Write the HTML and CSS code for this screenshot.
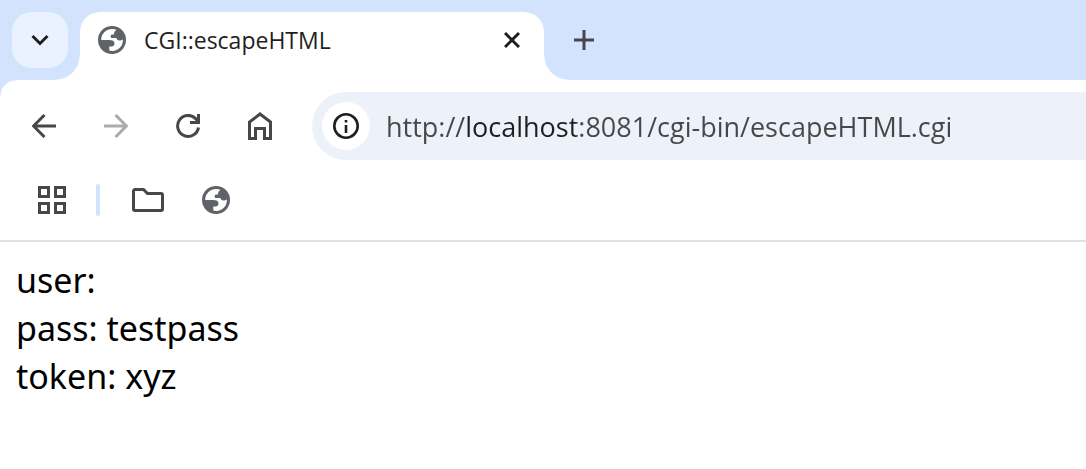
FILE: index.html
```
<!DOCTYPE html>
<html lang="en">
<head>
    <meta charset="UTF-8">
    <meta name="viewport" content="width=device-width, initial-scale=1.0">
    <title>CGI::escapeHTML</title>
    <link rel="stylesheet" href="styles.css">
</head>
<body>
    <svg class="sprite" aria-hidden="true">
        <symbol id="globe" viewBox="0 0 28 28">
            <circle cx="14" cy="14" r="14" fill="#5f6368"/>
            <path fill="#fff" d="M18.600 3.800C11 .9 3.200 6 3.200 14H11c3.500 0 5.500 1.200 5.500 3.400 0 2.200-1.500 3.100-5.200 3.100v4C18.500 26.500 25.500 21 24.800 13.200c-1 1-2.300 1.300-3.600 1.300-1.700 0-2.400-1-2.700-2.500h-4.300c-1.700 0-2.200-2.500-.4-3.600H16c0-2 .7-3.200 2.600-4.600z"/>
        </symbol>
    </svg>

    <header class="tab-strip">
        <button class="tab-search" aria-label="Search tabs">
            <svg width="18" height="12" viewBox="0 0 18 12"><path d="M1.500 2L9 9.500 16.500 2" fill="none" stroke="#1f1f1f" stroke-width="3"/></svg>
        </button>
        <div class="tab">
            <svg class="globe"><use href="#globe"/></svg>
            <span class="tab-title">CGI::escapeHTML</span>
            <button class="icon-button" aria-label="Close tab">
                <svg width="16" height="16" viewBox="0 0 16 16"><path d="M1 1l14 14M15 1L1 15" fill="none" stroke="#1f1f1f" stroke-width="3"/></svg>
            </button>
        </div>
        <button class="icon-button new-tab" aria-label="New tab">
            <svg width="20" height="20" viewBox="0 0 20 20"><path d="M10 0v20M0 10h20" fill="none" stroke="#474747" stroke-width="3"/></svg>
        </button>
    </header>

    <nav class="toolbar">
        <button class="icon-button" aria-label="Back">
            <svg width="24" height="24" viewBox="0 0 24 24"><path d="M24 12H2M12.500 1L1.500 12l11 11" fill="none" stroke="#474747" stroke-width="3"/></svg>
        </button>
        <button class="icon-button" aria-label="Forward" disabled>
            <svg width="24" height="24" viewBox="0 0 24 24"><path d="M0 12h22M11.500 1l11 11-11 11" fill="none" stroke="#ababab" stroke-width="3"/></svg>
        </button>
        <button class="icon-button" aria-label="Reload">
            <svg width="24" height="24" viewBox="0 0 24 24"><path d="M22.500 13.500A10.500 10.500 0 1 1 20 5l2.500 3M22.500 0v8.500H14" fill="none" stroke="#474747" stroke-width="3"/></svg>
        </button>
        <button class="icon-button" aria-label="Home">
            <svg width="24" height="28" viewBox="0 0 24 28"><path d="M1.500 26.500V10L12 2l10.500 8v16.500h-6v-10h-9v10z" fill="none" stroke="#474747" stroke-width="3"/></svg>
        </button>
        <form class="address-bar">
            <button class="site-info" type="button" aria-label="View site information">
                <svg width="26" height="26" viewBox="0 0 26 26"><circle cx="13" cy="13" r="11.700" fill="none" stroke="#1f1f1f" stroke-width="2.600"/><path d="M11.700 12h2.600v8h-2.600zM11.700 7h2.600v2.600h-2.600z" fill="#1f1f1f"/></svg>
            </button>
            <input class="address" type="text" aria-label="Address" spellcheck="false" value="http://localhost:8081/cgi-bin/escapeHTML.cgi">
        </form>
    </nav>

    <nav class="bookmarks">
        <button class="icon-button" aria-label="Apps">
            <svg width="28" height="28" viewBox="0 0 28 28"><path d="M1.500 1.500h9v9h-9zM17.500 1.500h9v9h-9zM1.500 17.500h9v9h-9zM17.500 17.500h9v9h-9z" fill="none" stroke="#474747" stroke-width="3"/></svg>
        </button>
        <span class="divider"></span>
        <button class="icon-button" aria-label="Bookmark folder">
            <svg width="32" height="24" viewBox="0 0 32 24"><path d="M3 1.500h8.500l4 4H29a1.500 1.500 0 0 1 1.500 1.500v14a1.500 1.500 0 0 1-1.500 1.500H3A1.500 1.500 0 0 1 1.500 21V3A1.500 1.500 0 0 1 3 1.500z" fill="none" stroke="#474747" stroke-width="3"/></svg>
        </button>
        <button class="icon-button" aria-label="Bookmark">
            <svg class="globe"><use href="#globe"/></svg>
        </button>
    </nav>

    <main class="page">
        user: <br>
        pass: testpass<br>
        token: xyz
    </main>
</body>
</html>
```
FILE: styles.css
```
* {
    margin: 0;
    padding: 0;
    box-sizing: border-box;
}

body {
    font-family: 'Open Sans', sans-serif;
    background-color: #fff;
    color: #000;
}

button {
    border: none;
    background: none;
    cursor: pointer;
}

svg {
    display: block;
    flex-shrink: 0;
}

.sprite {
    position: absolute;
    width: 0;
    height: 0;
}

.globe {
    width: 28px;
    height: 28px;
}

.icon-button {
    display: flex;
    align-items: center;
    justify-content: center;
    width: 32px;
    height: 32px;
}

/* Tab strip */
.tab-strip {
    display: flex;
    align-items: flex-start;
    height: 80px;
    padding: 12px 12px 0;
    background-color: #d3e3fd;
}

.tab-search {
    display: flex;
    align-items: center;
    justify-content: center;
    width: 56px;
    height: 56px;
    margin-right: 12px;
    border-radius: 20px;
    background-color: #ebf2ff;
}

.tab {
    position: relative;
    display: flex;
    align-items: center;
    width: 464px;
    height: 68px;
    padding: 0 16px 12px 18px;
    border-radius: 20px 20px 0 0;
    background-color: #fff;
}

/* Curved feet of the active tab */
.tab::before,
.tab::after {
    content: "";
    position: absolute;
    bottom: 0;
    width: 24px;
    height: 24px;
}

.tab::before {
    right: 100%;
    background: radial-gradient(circle at 0 0, transparent 23px, #fff 24px);
}

.tab::after {
    left: 100%;
    background: radial-gradient(circle at 100% 0, transparent 23px, #fff 24px);
}

.tab-title {
    flex: 1;
    margin-left: 18px;
    font-size: 23px;
    color: #1f1f1f;
}

.new-tab {
    margin: 12px 0 0 24px;
}

/* Toolbar */
.toolbar {
    display: flex;
    align-items: center;
    gap: 40px;
    height: 92px;
    padding-left: 28px;
    background: radial-gradient(circle at 16px 16px, #fff 15px, #d3e3fd 16px) 0 0 / 16px 16px no-repeat;
}

.address-bar {
    display: flex;
    flex: 1;
    align-items: center;
    gap: 16px;
    height: 68px;
    margin-left: -4px;
    padding-left: 10px;
    border-radius: 34px 0 0 34px;
    background-color: #ecf1fa;
}

.site-info {
    display: flex;
    align-items: center;
    justify-content: center;
    width: 48px;
    height: 48px;
    border-radius: 50%;
    background-color: #fff;
}

/* The host is darker than the rest of the address */
.address {
    flex: 1;
    min-width: 0;
    border: none;
    outline: none;
    font-family: inherit;
    font-size: 27px;
    color: transparent;
    caret-color: #1f1f1f;
    background: linear-gradient(to right, #474747 79px, #1f1f1f 79px 190px, #474747 190px);
    -webkit-background-clip: text;
    background-clip: text;
}

/* Bookmarks bar */
.bookmarks {
    display: flex;
    align-items: center;
    gap: 36px;
    height: 70px;
    padding: 0 36px 12px;
    border-bottom: 2px solid #e1e1e1;
}

.divider {
    width: 4px;
    height: 32px;
    margin: 0 -4px 0 -8px;
    border-radius: 2px;
    background-color: #d3e3fd;
}

/* Page content */
.page {
    padding: 14px 16px;
    font-family: 'Noto Sans', sans-serif;
    font-size: 34px;
    line-height: 48px;
}
```
